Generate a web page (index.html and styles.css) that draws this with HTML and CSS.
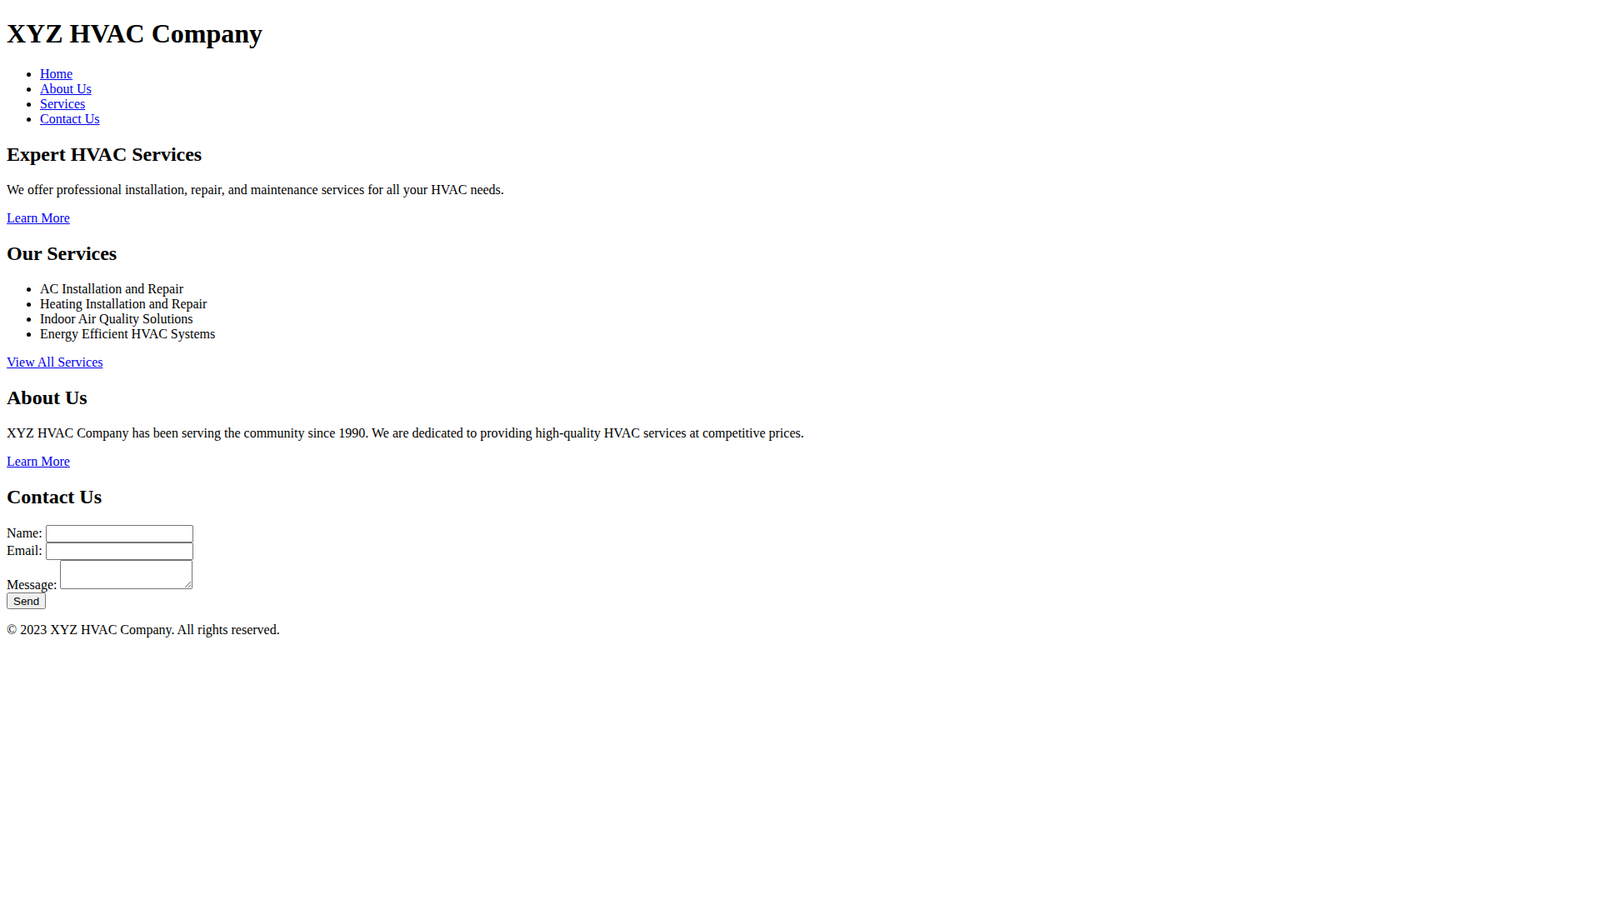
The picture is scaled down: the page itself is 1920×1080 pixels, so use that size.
FILE: index.html
```html
<!DOCTYPE html>
<html lang="en">
<head>
    <meta charset="UTF-8">
    <meta name="viewport" content="width=device-width, initial-scale=1.0">
    <title>XYZ HVAC Company</title>
    <link rel="stylesheet" href="styles.css">
</head>
<body>
    <header>
        <h1 class="site-title">XYZ HVAC Company</h1>
        <nav>
            <ul>
                <li><a href="#">Home</a></li>
                <li><a href="#about">About Us</a></li>
                <li><a href="#services">Services</a></li>
                <li><a href="#contact">Contact Us</a></li>
            </ul>
        </nav>
    </header>

    <main>
        <section class="hero">
            <h2>Expert HVAC Services</h2>
            <p>We offer professional installation, repair, and maintenance services for all your HVAC needs.</p>
            <a href="#">Learn More</a>
        </section>

        <section id="services">
            <h2>Our Services</h2>
            <ul>
                <li>AC Installation and Repair</li>
                <li>Heating Installation and Repair</li>
                <li>Indoor Air Quality Solutions</li>
                <li>Energy Efficient HVAC Systems</li>
            </ul>
            <a href="#">View All Services</a>
        </section>

        <section id="about">
            <h2>About Us</h2>
            <p>XYZ HVAC Company has been serving the community since 1990. We are dedicated to providing high-quality HVAC services at competitive prices.</p>
            <a href="#">Learn More</a>
        </section>

        <section id="contact">
            <h2>Contact Us</h2>
            <form class="contact-form">
                <label for="name">Name:</label>
                <input type="text" id="name" name="name"><br>
                <label for="email">Email:</label>
                <input type="email" id="email" name="email"><br>
                <label for="message">Message:</label>
                <textarea id="message" name="message"></textarea><br>
                <button type="submit">Send</button>
            </form>
        </section>
    </main>

    <footer>
        <p>&copy; 2023 XYZ HVAC Company. All rights reserved.</p>
    </footer>
</body>
</html>
```

FILE: styles.css
```css
body {
    font-family: "Liberation Serif", "Times New Roman", serif;
}
.site-title {
    margin-top: 14px;
}
.contact-form input {
    box-sizing: border-box;
    width: 177px;
    height: 21px;
}
.contact-form textarea {
    box-sizing: border-box;
    width: 159px;
    height: 35px;
}
.contact-form button {
    box-sizing: border-box;
    width: 47px;
    height: 20px;
    font-family: "Liberation Sans", Arial, sans-serif;
    font-size: 13.33px;
}
```
